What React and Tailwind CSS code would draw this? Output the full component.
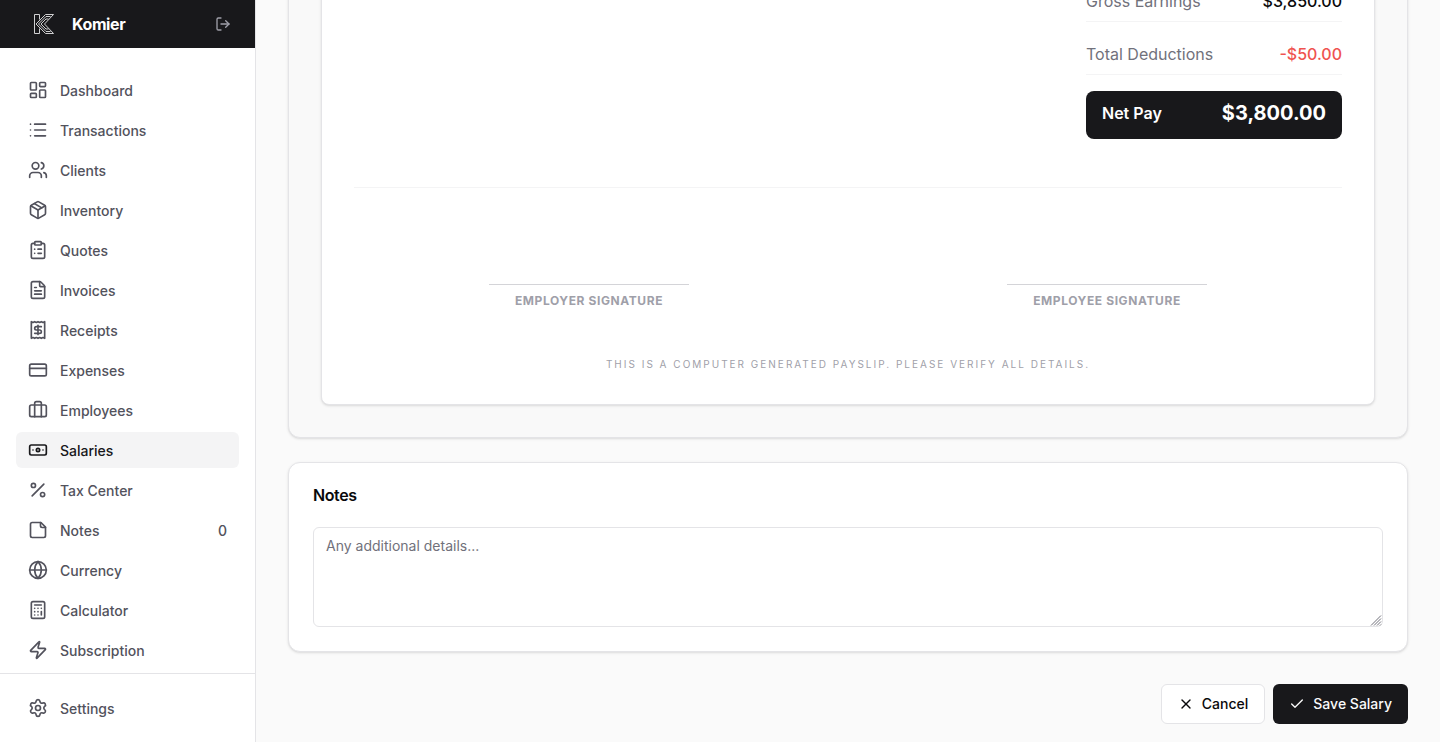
import React, { useState } from 'react';
import {
  LayoutDashboard,
  List,
  Users,
  Package,
  ClipboardList,
  FileText,
  CreditCard,
  Percent,
  Globe,
  Calculator,
  Zap,
  Settings,
  LogOut,
  Check,
  X
} from 'lucide-react';

// shared wrapper for the icons that need their own paths
const LineIcon = ({ children, className }) => (
  <svg
    className={className}
    viewBox="0 0 24 24"
    fill="none"
    stroke="currentColor"
    strokeWidth="2"
    strokeLinecap="round"
    strokeLinejoin="round"
    aria-hidden="true"
  >
    {children}
  </svg>
);

const ReceiptIcon = ({ className }) => (
  <LineIcon className={className}>
    <path d="M4 2v20l2-1 2 1 2-1 2 1 2-1 2 1 2-1 2 1V2l-2 1-2-1-2 1-2-1-2 1-2-1-2 1Z" />
    <path d="M16 8h-6a2 2 0 1 0 0 4h4a2 2 0 1 1 0 4H8" />
    <path d="M12 17.5v-11" />
  </LineIcon>
);

const LuggageIcon = ({ className }) => (
  <LineIcon className={className}>
    <rect width="20" height="14" x="2" y="6" rx="2" />
    <path d="M8 20V4a2 2 0 0 1 2-2h4a2 2 0 0 1 2 2v16" />
  </LineIcon>
);

const BanknoteIcon = ({ className }) => (
  <LineIcon className={className}>
    <rect width="20" height="12" x="2" y="6" rx="2" />
    <circle cx="12" cy="12" r="2" />
    <path d="M6 12h.01M18 12h.01" />
  </LineIcon>
);

const NoteIcon = ({ className }) => (
  <LineIcon className={className}>
    <path d="M15.5 3H5a2 2 0 0 0-2 2v14c0 1.1.9 2 2 2h14a2 2 0 0 0 2-2V8.5Z" />
    <path d="M15 3v4a2 2 0 0 0 2 2h4" />
  </LineIcon>
);

const Logo = () => (
  <svg className="h-6 w-6" viewBox="0 0 24 24" fill="none" stroke="#e4e4e7" strokeWidth="0.9" aria-hidden="true">
    <path d="M7.5 7.5v-5h-5v19h5v-5" />
    <path d="M4 12l9.500-9.500h8L12.500 12l9 9.500h-8Z" />
    <path d="M18.500 4.500h-4.500L6.500 12l7.500 7.500h4.500" />
    <path d="M16.500 7h-2.500L9 12l5 5h2.500" />
  </svg>
);

const navItems = [
  { label: 'Dashboard', icon: LayoutDashboard },
  { label: 'Transactions', icon: List },
  { label: 'Clients', icon: Users },
  { label: 'Inventory', icon: Package },
  { label: 'Quotes', icon: ClipboardList },
  { label: 'Invoices', icon: FileText },
  { label: 'Receipts', icon: ReceiptIcon },
  { label: 'Expenses', icon: CreditCard },
  { label: 'Employees', icon: LuggageIcon },
  { label: 'Salaries', icon: BanknoteIcon, active: true },
  { label: 'Tax Center', icon: Percent },
  { label: 'Notes', icon: NoteIcon, count: 0 },
  { label: 'Currency', icon: Globe },
  { label: 'Calculator', icon: Calculator },
  { label: 'Subscription', icon: Zap }
];

const NavItem = ({ item }) => {
  const Icon = item.icon;
  return (
    <a
      href="#"
      aria-current={item.active ? 'page' : undefined}
      className={`flex h-9 shrink-0 items-center gap-3 rounded-md px-3 text-sm leading-[21px] font-medium ${
        item.active ? 'bg-zinc-100 text-zinc-900' : 'text-zinc-600 hover:bg-zinc-50'
      }`}
    >
      <Icon className="h-5 w-5" />
      <span className="flex-1">{item.label}</span>
      {item.count !== undefined && <span>{item.count}</span>}
    </a>
  );
};

const Sidebar = () => (
  <aside className="flex w-64 shrink-0 flex-col border-r border-zinc-200 bg-white">
    <div className="flex h-12 shrink-0 items-center justify-between bg-[#18181b] px-6 text-white">
      <a href="#" className="flex items-center gap-4 pl-2">
        <Logo />
        <span className="text-base font-bold tracking-tight">Komier</span>
      </a>
      <button type="button" aria-label="Log out" className="text-zinc-400">
        <LogOut className="h-4 w-4" />
      </button>
    </div>

    <nav className="flex min-h-0 flex-1 flex-col gap-1 overflow-hidden px-4 pt-6">
      {navItems.map((item) => (
        <NavItem key={item.label} item={item} />
      ))}
    </nav>

    <div className="border-t border-zinc-200 p-4">
      <NavItem item={{ label: 'Settings', icon: Settings }} />
    </div>
  </aside>
);

const SummaryRow = ({ label, value, valueClass }) => (
  <div className="flex items-center justify-between border-b border-zinc-100 pt-1 pb-2">
    <span className="text-zinc-500">{label}</span>
    <span className={`font-medium ${valueClass}`}>{value}</span>
  </div>
);

const Signature = ({ label }) => (
  <div className="flex justify-center">
    <div className="w-[200px] border-t border-zinc-300 pt-2 text-center text-xs font-bold tracking-wider text-zinc-400 uppercase">
      {label}
    </div>
  </div>
);

const Payslip = () => (
  <section className="rounded-xl border border-zinc-200 bg-[#f9f9f9] p-8 shadow-sm">
    <div className="rounded-lg border border-zinc-200 bg-white p-8 shadow-sm">
      <div className="ml-auto flex w-64 flex-col gap-4">
        <SummaryRow label="Gross Earnings" value="$3,850.00" valueClass="text-zinc-950" />
        <SummaryRow label="Total Deductions" value="-$50.00" valueClass="text-[#ef5350]" />
        <div className="flex items-center justify-between rounded-lg bg-[#18181b] px-4 pt-2 pb-3 text-white">
          <span className="font-semibold">Net Pay</span>
          <span className="text-xl font-bold">$3,800.00</span>
        </div>
      </div>

      <div className="mt-12 grid grid-cols-2 gap-12 border-t border-zinc-100 pt-24">
        <Signature label="Employer Signature" />
        <Signature label="Employee Signature" />
      </div>

      <p className="mt-12 text-center text-[10px] leading-[15px] tracking-[2px] text-zinc-400 uppercase">
        This is a computer generated payslip. Please verify all details.
      </p>
    </div>
  </section>
);

const App = () => {
  const [notes, setNotes] = useState('');

  return (
    <div className="flex h-screen bg-[#fafafa] font-['Inter',sans-serif] text-zinc-950">
      <Sidebar />

      {/* form is pinned to its last section, the top runs off above */}
      <main className="flex min-w-0 flex-1 flex-col justify-end overflow-hidden px-8 pb-[18px]">
        <Payslip />

        <section className="mt-6 rounded-xl border border-zinc-200 bg-white p-6 shadow-sm">
          <label htmlFor="notes" className="block text-base leading-none font-semibold tracking-tight">
            Notes
          </label>
          <div className="relative mt-6">
            <textarea
              id="notes"
              value={notes}
              onChange={(e) => setNotes(e.target.value)}
              placeholder="Any additional details..."
              className="block h-[100px] w-full resize-y rounded-md border border-zinc-200 bg-white px-3 py-2 text-sm placeholder:text-zinc-500 [&::-webkit-resizer]:bg-transparent"
            />
            {/* resize grip */}
            <svg
              className="pointer-events-none absolute right-px bottom-px h-3 w-3"
              viewBox="0 0 12 12"
              fill="none"
              stroke="#71717a"
              strokeWidth="1"
              aria-hidden="true"
            >
              <path d="M1 11.5l10-10M4 11.5l7-7M7 11.5l4-4M10 11.5l1-1" />
            </svg>
          </div>
        </section>

        <div className="mt-8 flex justify-end gap-2 text-sm font-medium">
          <button type="button" className="flex h-10 items-center gap-2 rounded-md border border-zinc-200 bg-white px-4">
            <X className="h-4 w-4" />
            Cancel
          </button>
          <button type="submit" className="flex h-10 items-center gap-2 rounded-md bg-[#18181b] px-4 text-zinc-50">
            <Check className="h-4 w-4" />
            Save Salary
          </button>
        </div>
      </main>
    </div>
  );
};

export default App;
